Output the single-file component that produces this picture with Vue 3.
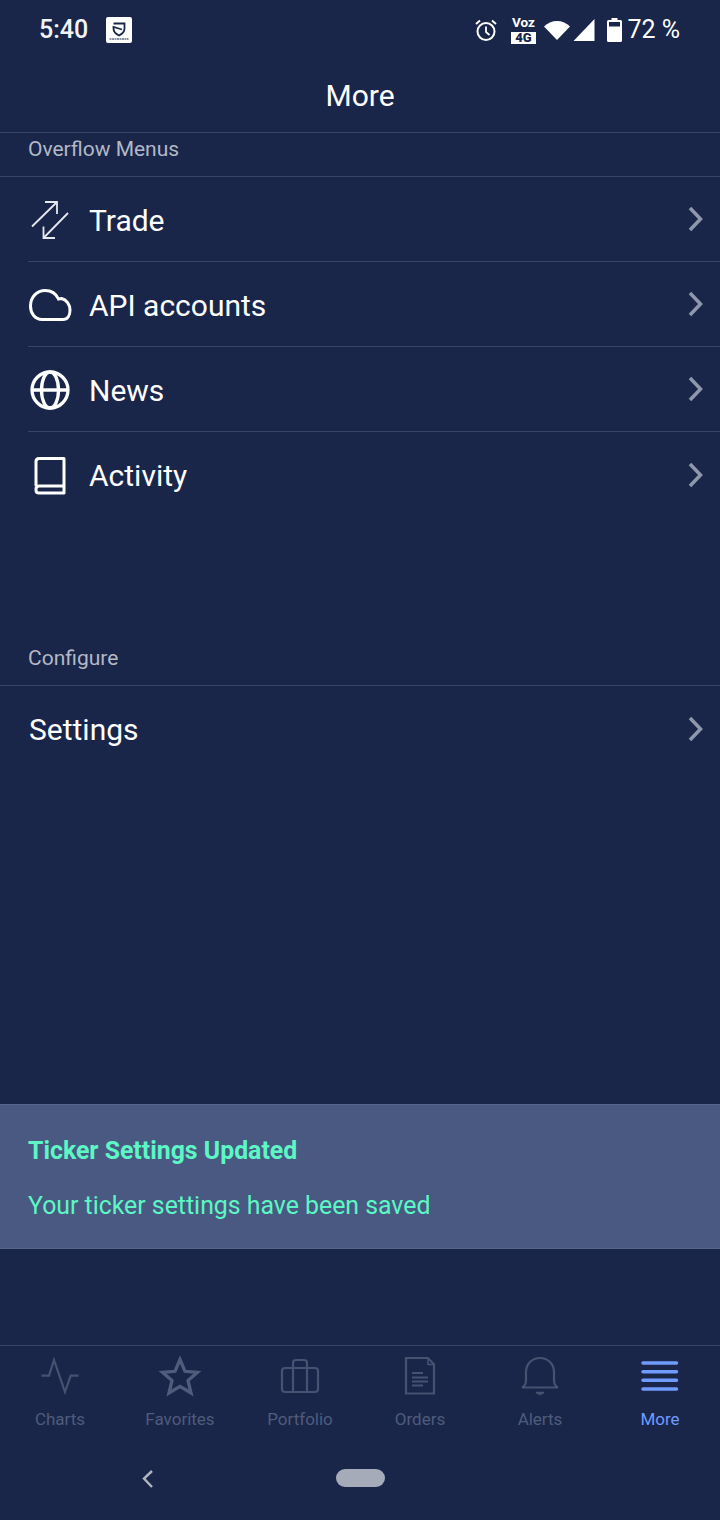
<template>
  <div class="phone">
    <div class="status-bar">
      <span class="time">5:40</span>
      <svg class="shield" width="26" height="26" viewBox="0 0 26 26">
        <rect width="26" height="26" rx="2" fill="#fff" />
        <path d="M7.500 6.500H18.500V11.500C18.500 14.500 16 17 13 18.500C10 17 7.500 14.500 7.500 11.500V10L16 12.500" fill="none" stroke="#19264a" stroke-width="1.800" />
        <path d="M3.500 22H22.500" stroke="#19264a" stroke-width="1.200" stroke-dasharray="2 .5" />
      </svg>
      <div class="status-right">
        <svg class="alarm" width="24" height="24" viewBox="0 0 24 24" fill="none" stroke="#fff">
          <circle cx="12" cy="13.500" r="8.500" stroke-width="2" />
          <path d="M12 8.500V14L15.500 17" stroke-width="1.800" />
          <path d="M2 6L6 2.500M22 6L18 2.500" stroke-width="2" />
        </svg>
        <div class="network">
          <span class="voz">Voz</span>
          <span class="lte">4G</span>
        </div>
        <svg class="wifi" width="26" height="20" viewBox="0 0 26 20">
          <path d="M0 6.500C3.500 3 8 1 13 1C18 1 22.500 3 26 6.500L13 20Z" fill="#fff" />
        </svg>
        <svg class="signal" width="22" height="22" viewBox="0 0 22 22">
          <path d="M21.500 0V22H0.500Z" fill="#fff" />
        </svg>
        <svg class="battery" width="15" height="24" viewBox="0 0 15 24">
          <path d="M4.500 0H10.500V2H13.500A1.500 1.500 0 0 1 15 3.500V22.500A1.500 1.500 0 0 1 13.500 24H1.500A1.500 1.500 0 0 1 0 22.500V3.500A1.500 1.500 0 0 1 1.500 2H4.500Z" fill="#fff" />
          <rect x="2" y="4" width="11" height="4.500" fill="#19264a" />
        </svg>
        <span class="percent">72 %</span>
      </div>
    </div>

    <header class="page-title">More</header>

    <main class="content">
      <div class="section-label overflow-label">Overflow Menus</div>
      <div class="row" v-for="item in menu" :key="item.name">
        <svg class="row-icon" width="44" height="44" viewBox="0 0 44 44" fill="none" stroke="#fff">
          <g v-if="item.name === 'Trade'" stroke-width="1.800" stroke="#e6e8ee">
            <path d="M4 29.500L29 5M17 5H29V17" />
            <path d="M40 16L15.500 41M15.500 29.500V41H27" />
          </g>
          <path v-else-if="item.name === 'API accounts'" stroke-width="3" d="M14 37.500C7 37.500 2.500 31.500 2.500 24C2.500 15 9 8.500 17 8.500C23 8.500 28 11.500 30.500 17C31.500 16.700 32.500 16.500 33.500 16.500C38.500 17.500 42 22.500 42 28C42 33.500 39.500 37.500 35 37.500Z" />
          <g v-else-if="item.name === 'News'" stroke-width="3.300">
            <circle cx="22" cy="23" r="18" />
            <ellipse cx="22" cy="23" rx="8.500" ry="18" />
            <path d="M4 23H40" />
          </g>
          <g v-else stroke-width="3" stroke-linejoin="round">
            <path d="M8 33V8.500C8 6.500 9 5.500 11 5.500H36V40H11C9 40 8 39 8 37V36C8 34 9 33 11 33H36" />
          </g>
        </svg>
        <span class="row-text">{{ item.name }}</span>
        <svg class="chevron" width="16" height="26" viewBox="0 0 16 26">
          <path d="M2 2L12.500 13L2 24" fill="none" stroke="#8f97ad" stroke-width="3.500" />
        </svg>
      </div>

      <div class="section-label configure-label">Configure</div>
      <div class="row settings-row">
        <span class="row-text">Settings</span>
        <svg class="chevron" width="16" height="26" viewBox="0 0 16 26">
          <path d="M2 2L12.500 13L2 24" fill="none" stroke="#8f97ad" stroke-width="3.500" />
        </svg>
      </div>

      <div class="toast">
        <div class="toast-title">Ticker Settings Updated</div>
        <div class="toast-text">Your ticker settings have been saved</div>
      </div>
    </main>

    <nav class="tabs">
      <div class="tab" v-for="tab in tabs" :key="tab" :class="{ active: tab === 'More' }">
        <svg width="44" height="44" viewBox="0 0 44 44" fill="none" stroke="#475170">
          <path v-if="tab === 'Charts'" stroke-width="2.200" d="M3.500 21.700H11L16 6L27 38L32.700 21.700H40.500" />
          <path v-else-if="tab === 'Favorites'" stroke-width="3.300" stroke="#505c7c" d="M22 5.500L27 17.300L39.500 18.300L30 26.500L33 39L22 32.400L11 39L14 26.500L4.500 18.300L17 17.300Z" />
          <g v-else-if="tab === 'Portfolio'" stroke-width="2.200">
            <rect x="4" y="14" width="36" height="24" rx="3" />
            <path d="M15 14V9C15 7 16 6 18 6H26C28 6 29 7 29 9V14M15 14V38M29 14V38" />
          </g>
          <g v-else-if="tab === 'Orders'" stroke-width="2.200">
            <path d="M8 4H30L36 10.500V39.500H8Z" />
            <path d="M30 4V10.500H36" stroke-width="1.500" />
            <path d="M14 19H25M14 23.500H30M14 27.500H30M14 31.500H25" stroke-width="2.200" />
          </g>
          <g v-else-if="tab === 'Alerts'" stroke-width="2.200">
            <path d="M4 33.500H40C36.500 32 36 29 36 26V18C36 10 30 4 22 4C14 4 8 10 8 18V26C8 29 7.500 32 4 33.500Z" />
            <path d="M18 38.500H26L22 40.500Z" fill="#475170" stroke-width="1.500" />
          </g>
          <g v-else stroke="#6f9bff" stroke-width="3.500" stroke-linecap="round">
            <path d="M5 9H38.500M5 17.700H38.500M5 26.200H38.500M5 35H38.500" />
          </g>
        </svg>
        <span class="tab-label">{{ tab }}</span>
      </div>
    </nav>

    <div class="nav-bar">
      <svg class="back" width="14" height="20" viewBox="0 0 14 20">
        <path d="M11 2L3 9.500L11 18" fill="none" stroke="#b0b5c2" stroke-width="2.400" />
      </svg>
      <div class="pill"></div>
    </div>
  </div>
</template>

<script setup>
const menu = [
  { name: 'Trade' },
  { name: 'API accounts' },
  { name: 'News' },
  { name: 'Activity' },
]

const tabs = ['Charts', 'Favorites', 'Portfolio', 'Orders', 'Alerts', 'More']
</script>

<style>
body {
  margin: 0;
  background: #19264a;
}
</style>

<style scoped>
.phone {
  width: 720px;
  height: 1520px;
  display: flex;
  flex-direction: column;
  background: #19264a;
  color: #fff;
  font-family: Roboto, "Liberation Sans", sans-serif;
  overflow: hidden;
}

.status-bar {
  height: 57px;
  display: flex;
  align-items: center;
  padding: 2px 40px 0 39px;
  box-sizing: border-box;
  flex-shrink: 0;
}

.time {
  font-size: 25px;
  font-weight: 500;
  color: #f2f3f6;
}

.shield {
  margin-left: 18px;
}

.status-right {
  margin-left: auto;
  display: flex;
  align-items: center;
}

.network {
  margin-left: 12px;
  width: 26px;
  display: flex;
  flex-direction: column;
  align-items: center;
}

.voz {
  font-size: 13.500px;
  line-height: 13px;
  font-weight: 700;
}

.lte {
  width: 25px;
  height: 12px;
  margin-top: 3px;
  background: #fff;
  color: #19264a;
  font-size: 13px;
  line-height: 12px;
  font-weight: 900;
  text-align: center;
}

.wifi {
  margin-left: 8px;
}

.signal {
  margin-left: 3px;
}

.battery {
  margin-left: 12px;
}

.percent {
  margin-left: 5px;
  font-size: 25px;
  font-weight: 400;
}

.page-title {
  height: 76px;
  line-height: 78px;
  box-sizing: border-box;
  border-bottom: 1px solid #37436a;
  text-align: center;
  font-size: 30px;
  flex-shrink: 0;
}

.content {
  flex: 1;
  position: relative;
}

.section-label {
  font-size: 21px;
  color: #b3b8c6;
  padding-left: 28px;
  box-sizing: border-box;
  border-bottom: 1px solid #37436a;
}

.overflow-label {
  height: 44px;
  line-height: 33px;
}

.configure-label {
  height: 45px;
  margin-top: 124px;
  line-height: 35px;
}

.row {
  height: 85px;
  margin-left: 28px;
  display: flex;
  align-items: center;
  border-bottom: 1px solid #37436a;
  box-sizing: border-box;
}

.row:nth-of-type(5),
.settings-row {
  border-bottom: none;
}

.row-icon {
  flex-shrink: 0;
}

.row-text {
  margin-top: 2px;
  margin-left: 17px;
  font-size: 30px;
}

.settings-row .row-text {
  margin-left: 1px;
}

.chevron {
  margin-left: auto;
  margin-right: 16px;
}

.toast {
  position: absolute;
  left: 0;
  right: 0;
  top: 971px;
  height: 145px;
  box-sizing: border-box;
  padding: 31px 28px 0;
  background: #495982;
  border-top: 1px solid #56658c;
  border-bottom: 1px solid #56658c;
  color: #5cf7c4;
  font-size: 24.850px;
}

.toast-title {
  font-weight: 700;
  line-height: 30px;
}

.toast-text {
  margin-top: 25px;
  line-height: 30px;
}

.tabs {
  height: 96px;
  border-top: 1px solid #37436a;
  box-sizing: border-box;
  display: flex;
  flex-shrink: 0;
}

.tab {
  width: 120px;
  padding-top: 8px;
  display: flex;
  flex-direction: column;
  align-items: center;
  color: #4f5b7b;
}

.tab.active {
  color: #6f9bff;
}

.tab-label {
  margin-top: 11px;
  font-size: 17px;
  line-height: 20px;
}

.nav-bar {
  height: 79px;
  padding: 0 0 6px 141px;
  box-sizing: border-box;
  display: flex;
  align-items: center;
  flex-shrink: 0;
}

.back {
  flex-shrink: 0;
  margin-top: 2px;
}

.pill {
  width: 49px;
  height: 18px;
  margin-left: 181px;
  border-radius: 9px;
  background: #a5abb8;
}
</style>
